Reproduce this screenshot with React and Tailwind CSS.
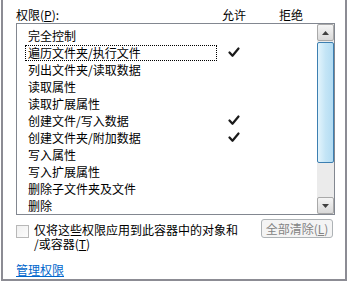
const items = [
  { name: '完全控制' },
  { name: '遍历文件夹/执行文件', allow: true, focus: true },
  { name: '列出文件夹/读取数据' },
  { name: '读取属性' },
  { name: '读取扩展属性' },
  { name: '创建文件/写入数据', allow: true },
  { name: '创建文件夹/附加数据', allow: true },
  { name: '写入属性' },
  { name: '写入扩展属性' },
  { name: '删除子文件夹及文件' },
  { name: '删除' },
]

function Check() {
  return (
    <svg width="12" height="11" viewBox="0 0 12 11" className="block">
      <path d="M1.5 5.5 L4.5 8.8 L10.5 1.5" fill="none" stroke="#1a1a1a" strokeWidth="2.2" strokeLinecap="round" strokeLinejoin="round" />
    </svg>
  )
}

function ScrollButton({ up }) {
  return (
    <div className="w-[17px] h-[17px] border border-[#a9a9a9] rounded-[2px] bg-gradient-to-b from-[#f5f5f5] to-[#d9d9d9] flex items-center justify-center">
      <svg width="7" height="4" viewBox="0 0 7 4">
        <path d={up ? 'M0 4 L3.5 0 L7 4 Z' : 'M0 0 L3.5 4 L7 0 Z'} fill="#404040" />
      </svg>
    </div>
  )
}

export default function App() {
  return (
    <div className="w-[348px] h-[282px] bg-white text-[12px] leading-none text-black" style={{ fontFamily: '"Noto Sans CJK SC", "Liberation Sans", sans-serif' }}>
      <div className="ml-px w-[346px] h-[281px] border-x-2 border-b-2 border-[#8c8c94] pl-[13px] pr-[11px] pt-[7px] flex flex-col">
        <div className="flex h-[15px] items-center">
          <span className="w-[206px]">权限(<span className="underline">P</span>):</span>
          <span className="w-[57px]">允许</span>
          <span>拒绝</span>
        </div>
        <div className="mt-[1px] h-[192px] w-[319px] border border-[#828790] flex">
          <div className="flex-1 pt-[3px] pl-[8px]">
            {items.map((it) => (
              <div key={it.name} className="h-[17px] flex items-center">
                <div className={`w-[192px] h-[16px] flex items-center pl-[2px] ${it.focus ? 'border border-dotted border-black' : 'border border-transparent'}`}>
                  {it.name}
                </div>
                <div className="ml-[11px] w-[12px]">{it.allow && <Check />}</div>
              </div>
            ))}
          </div>
          <div className="w-[17px] bg-[#ebebeb] flex flex-col">
            <ScrollButton up />
            <div className="mt-px h-[121px] border border-[#3c7fb1] rounded-[2px] bg-gradient-to-r from-[#e3f4fc] via-[#c4e5f6] to-[#b3dcf3]" />
            <div className="flex-1" />
            <ScrollButton />
          </div>
        </div>
        <div className="mt-[4px] flex">
          <div className="mt-[6px] w-[13px] h-[13px] border border-[#b8b8b8] bg-gradient-to-br from-[#f0f0f0] to-[#fcfcfc] shrink-0" />
          <div className="ml-[5px] mt-[4px] w-[210px] leading-[14px] whitespace-nowrap">
            <div>仅将这些权限应用到此容器中的对象和</div>
            <div>/或容器(<span className="underline">T</span>)</div>
          </div>
          <div className="ml-[17px] w-[72px] h-[19px] border border-[#adb2b5] rounded-[3px] bg-[#f4f4f4] text-[#838383] flex items-center justify-center">
            全部清除(<span className="underline">L</span>)
          </div>
        </div>
        <div className="mt-[13px]">
          <span className="text-[#0066cc] underline">管理权限</span>
        </div>
      </div>
    </div>
  )
}
